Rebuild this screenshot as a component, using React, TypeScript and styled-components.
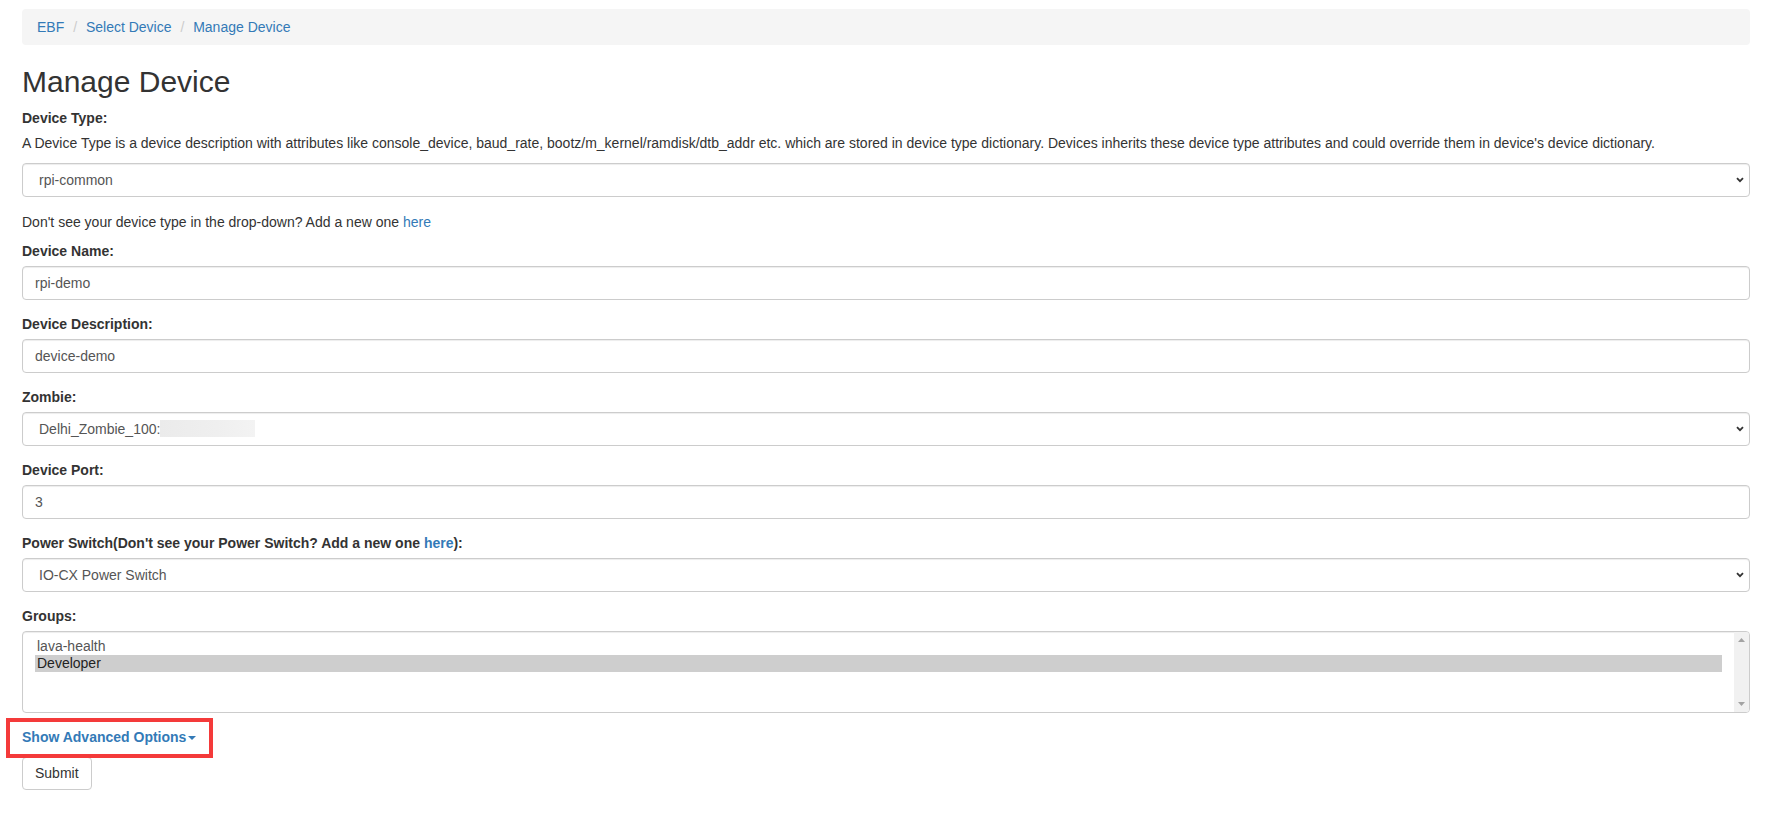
import React from "react";
import styled, { createGlobalStyle } from "styled-components";

const GlobalStyle = createGlobalStyle`
  * { box-sizing: border-box; }
  html, body { margin: 0; padding: 0; background: #fff; }
  body {
    font-family: "Liberation Sans", Arial, Helvetica, sans-serif;
    font-size: 14px;
    line-height: 20px;
    color: #333;
  }
`;

const Page = styled.div`
  padding: 9px 20px 30px 22px;
`;

const Breadcrumb = styled.ol`
  list-style: none;
  margin: 0 0 20px;
  padding: 8px 15px;
  background: #f5f5f5;
  border-radius: 4px;
  line-height: 20px;
`;

const Crumb = styled.li`
  display: inline-block;
  & + &::before {
    content: "/\\00a0";
    padding: 0 5px;
    color: #ccc;
  }
`;

const Link = styled.a<{ $bold?: boolean }>`
  color: #337ab7;
  text-decoration: none;
  font-weight: ${(p) => (p.$bold ? 700 : "inherit")};
  cursor: pointer;
`;

const Title = styled.h2`
  font-size: 30px;
  font-weight: 500;
  line-height: 1.1;
  margin: 20px 0 10px;
  color: #333;
`;

const Group = styled.div<{ $gap?: number }>`
  margin-bottom: ${(p) => p.$gap ?? 14}px;
`;

const Label = styled.label`
  display: block;
  font-weight: 700;
  margin-bottom: 5px;
  line-height: 20px;
`;

const Help = styled.p<{ $mb?: number }>`
  margin: 0 0 ${(p) => p.$mb ?? 10}px;
`;

const fieldBase = `
  display: block;
  width: 100%;
  height: 34px;
  padding: 6px 12px;
  font-family: "Liberation Sans", Arial, Helvetica, sans-serif;
  font-size: 14px;
  line-height: 20px;
  color: #555;
  background: #fff;
  border: 1px solid #ccc;
  border-radius: 4px;
  box-shadow: inset 0 1px 1px rgba(0, 0, 0, 0.075);
  outline: none;
`;

const Input = styled.input`
  ${fieldBase}
`;

const SelectWrap = styled.div`
  position: relative;
`;

const Select = styled.select`
  ${fieldBase}
  appearance: none;
  -webkit-appearance: none;
  padding-left: 16px;
  padding-right: 30px;
`;

const Chevron = styled.svg`
  position: absolute;
  right: 6px;
  top: 14px;
  width: 8px;
  height: 6px;
  pointer-events: none;
`;

const Redaction = styled.span`
  position: absolute;
  left: 138px;
  top: 8px;
  width: 95px;
  height: 17px;
  background: linear-gradient(90deg, #ebebeb, #efefef 60%, #f3f3f3);
  pointer-events: none;
`;

const ListBox = styled.div`
  display: flex;
  height: 82px;
  border: 1px solid #ccc;
  border-radius: 4px;
  box-shadow: inset 0 1px 1px rgba(0, 0, 0, 0.075);
  overflow: hidden;
  background: #fff;
`;

const Options = styled.div`
  flex: 1;
  padding: 6px 12px;
`;

const Option = styled.div<{ $selected?: boolean }>`
  padding: 0 2px;
  height: 17px;
  line-height: 17px;
  font-size: 14px;
  color: ${(p) => (p.$selected ? "#222" : "#555")};
  background: ${(p) => (p.$selected ? "#cecece" : "transparent")};
`;

const ScrollTrack = styled.div`
  width: 15px;
  background: #f1f1f1;
  display: flex;
  flex-direction: column;
  justify-content: space-between;
  align-items: center;
  padding: 6px 0 6px;
`;

const AdvancedRow = styled.div`
  position: relative;
  margin-bottom: 10px;
  line-height: 20px;
`;

const Caret = styled.span`
  display: inline-block;
  width: 0;
  height: 0;
  margin-left: 2px;
  vertical-align: middle;
  border-top: 4px solid;
  border-left: 4px solid transparent;
  border-right: 4px solid transparent;
`;

const Highlight = styled.span`
  position: absolute;
  left: -16px;
  top: -9px;
  width: 207px;
  height: 40px;
  border: 4px solid #f43a3a;
  pointer-events: none;
`;

const Button = styled.button`
  display: inline-block;
  height: 33px;
  padding: 6px 12px;
  font-family: "Liberation Sans", Arial, Helvetica, sans-serif;
  font-size: 14px;
  line-height: 19px;
  color: #333;
  background: #fff;
  border: 1px solid #ccc;
  border-radius: 4px;
  cursor: pointer;
`;

const ChevronIcon = () => (
  <Chevron viewBox="0 0 8 6">
    <polyline points="1,1.2 4,4.2 7,1.2" fill="none" stroke="#333" strokeWidth="1.8" />
  </Chevron>
);

const FakeSelect: React.FC<{ value: string; redacted?: boolean }> = ({ value, redacted }) => (
  <SelectWrap>
    <Select defaultValue={value}>
      <option value={value}>{value}</option>
    </Select>
    <ChevronIcon />
    {redacted && <Redaction />}
  </SelectWrap>
);

export default function App() {
  return (
    <>
      <GlobalStyle />
      <Page>
        <Breadcrumb>
          <Crumb><Link>EBF</Link></Crumb>{" "}
          <Crumb><Link>Select Device</Link></Crumb>{" "}
          <Crumb><Link>Manage Device</Link></Crumb>
        </Breadcrumb>

        <Title>Manage Device</Title>

        <Group $gap={15}>
          <Label>Device Type:</Label>
          <Help>
            A Device Type is a device description with attributes like console_device, baud_rate,
            bootz/m_kernel/ramdisk/dtb_addr etc. which are stored in device type dictionary. Devices
            inherits these device type attributes and could override them in device's device dictionary.
          </Help>
          <FakeSelect value="rpi-common" />
        </Group>
        <Help $mb={9}>
          Don't see your device type in the drop-down? Add a new one <Link>here</Link>
        </Help>

        <Group>
          <Label>Device Name:</Label>
          <Input defaultValue="rpi-demo" />
        </Group>

        <Group>
          <Label>Device Description:</Label>
          <Input defaultValue="device-demo" />
        </Group>

        <Group>
          <Label>Zombie:</Label>
          <FakeSelect value="Delhi_Zombie_100:" redacted />
        </Group>

        <Group>
          <Label>Device Port:</Label>
          <Input defaultValue="3" />
        </Group>

        <Group>
          <Label>
            Power Switch(Don't see your Power Switch? Add a new one <Link $bold>here</Link>):
          </Label>
          <FakeSelect value="IO-CX Power Switch" />
        </Group>

        <Group>
          <Label>Groups:</Label>
          <ListBox role="listbox">
            <Options>
              <Option>lava-health</Option>
              <Option $selected>Developer</Option>
            </Options>
            <ScrollTrack>
              <svg width="7" height="4" viewBox="0 0 7 4">
                <polygon points="0,4 3.5,0 7,4" fill="#a3a3a3" />
              </svg>
              <svg width="7" height="4" viewBox="0 0 7 4">
                <polygon points="0,0 3.5,4 7,0" fill="#a3a3a3" />
              </svg>
            </ScrollTrack>
          </ListBox>
        </Group>

        <AdvancedRow>
          <Link $bold>
            Show Advanced Options<Caret />
          </Link>
          <Highlight />
        </AdvancedRow>

        <Button type="button">Submit</Button>
      </Page>
    </>
  );
}
